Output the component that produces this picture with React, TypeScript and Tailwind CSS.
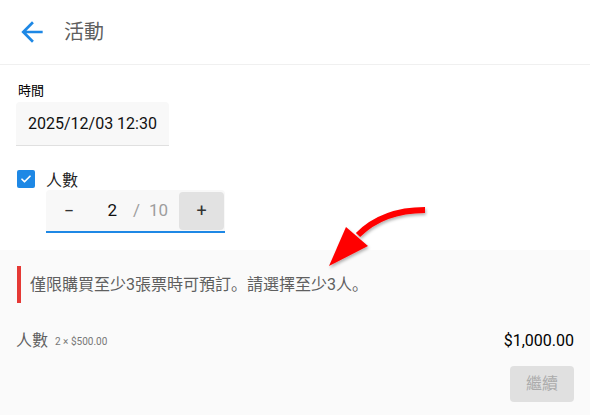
import { useState } from "react"

const FONT = "font-['Roboto','Noto_Sans_CJK_SC',sans-serif]"

export default function App() {
    const [count, setCount] = useState(2)
    const [checked, setChecked] = useState(true)

    return (
        <div className={`relative w-[590px] h-[415px] bg-white overflow-hidden ${FONT}`}>
            {/* Header */}
            <div className="h-[65px] flex items-center border-b border-[#f0f0f0]">
                <button className="ml-[16px] w-[32px] h-[32px] flex items-center justify-center text-[#1e88e5]">
                    <svg width="32" height="32" viewBox="0 0 24 24" fill="currentColor">
                        <path d="M20 11H7.83l5.59-5.59L12 4l-8 8 8 8 1.41-1.41L7.83 13H20v-2z" />
                    </svg>
                </button>
                <h1 className="ml-[16px] text-[20px] text-[#5f5f5f] leading-none">活動</h1>
            </div>

            {/* Form */}
            <div className="px-[16px] pt-[17px] h-[185px]">
                <div className="text-[13px] text-black leading-[18px] ml-[2px]">時間</div>
                <div className="mt-[2px] w-[153px] h-[44px] bg-[#f8f8f8] border-b border-[#e0e0e0] rounded-t-[4px] flex items-center pl-[12px] text-[16px] text-[#111]">
                    2025/12/03 12:30
                </div>

                <div className="mt-[19px] flex items-center">
                    <button
                        onClick={() => setChecked((c) => !c)}
                        className="ml-[1px] w-[18px] h-[18px] rounded-[2px] bg-[#1e88e5] flex items-center justify-center"
                    >
                        {checked && (
                            <svg width="12" height="12" viewBox="0 0 24 24" fill="none">
                                <path d="M4 12.5l5 5L20 6.5" stroke="white" strokeWidth="3.5" strokeLinecap="round" strokeLinejoin="round" />
                            </svg>
                        )}
                    </button>
                    <span className="ml-[11px] mt-[4px] text-[16px] text-[#222]">人數</span>
                </div>

                <div className="ml-[30px] -mt-[3px] w-[179px] h-[43px] bg-[#f8f8f8] border-b-2 border-[#1e88e5] rounded-t-[4px] flex items-center">
                    <button
                        onClick={() => setCount((c) => Math.max(0, c - 1))}
                        className="w-[46px] h-full flex items-center justify-center text-[18px] text-[#333]"
                    >
                        −
                    </button>
                    <span className="w-[25px] text-right text-[17px] text-[#111]">{count}</span>
                    <span className="ml-[16px] text-[17px] text-[#9e9e9e]">/</span>
                    <span className="ml-[9px] text-[17px] text-[#9e9e9e]">10</span>
                    <button
                        onClick={() => setCount((c) => Math.min(10, c + 1))}
                        className="ml-auto mr-[1px] w-[45px] h-[38px] rounded-[4px] bg-[#e2e2e2] flex items-center justify-center text-[18px] text-[#333]"
                    >
                        +
                    </button>
                </div>
            </div>

            {/* Summary */}
            <div className="h-[165px] bg-[#fafafa] px-[16px] pt-[16px]">
                <div className="flex items-center h-[37px] border-l-[4px] border-[#e53935] ml-[1px] pl-[9px] text-[16px] text-[#5f5f5f]">
                    僅限購買至少3張票時可預訂。請選擇至少3人。
                </div>

                <div className="mt-[26px] flex items-center justify-between">
                    <div className="flex items-center">
                        <span className="text-[16px] text-[#5f5f5f]">人數</span>
                        <span className="ml-[7px] text-[10px] text-[#777]">2 × $500.00</span>
                    </div>
                    <span className="text-[16px] text-black">$1,000.00</span>
                </div>

                <div className="mt-[13px] flex justify-end">
                    <button disabled className="w-[64px] h-[36px] rounded-[4px] bg-[#e0e0e0] text-[16px] text-[#ababab]">
                        繼續
                    </button>
                </div>
            </div>

            {/* Annotation arrow */}
            <svg className="absolute left-0 top-0 pointer-events-none" width="590" height="415" viewBox="0 0 590 415">
                <defs>
                    <filter id="sh" x="-20%" y="-20%" width="140%" height="140%">
                        <feDropShadow dx="1" dy="2" stdDeviation="1.5" floodColor="#000" floodOpacity="0.3" />
                    </filter>
                </defs>
                <g filter="url(#sh)">
                    <path d="M425 210 C397 210 374 219 358 235" stroke="#ff0000" strokeWidth="6" fill="none" strokeLinecap="butt" />
                    <polygon points="346,227 368,246 329,266" fill="#ff0000" />
                </g>
            </svg>
        </div>
    )
}
